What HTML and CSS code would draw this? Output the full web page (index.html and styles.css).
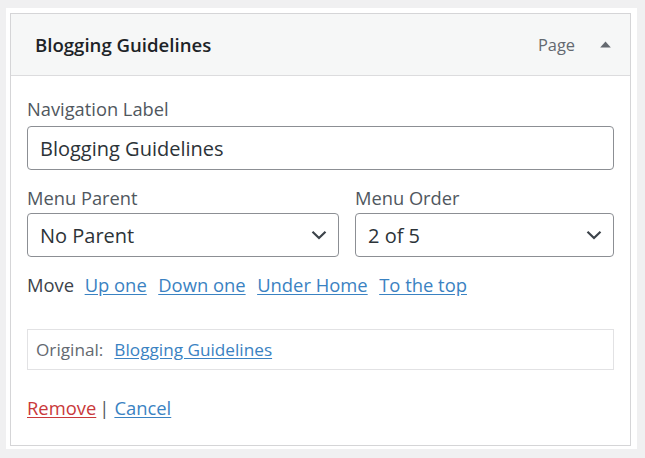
FILE: index.html
```html
<!DOCTYPE html>
<html lang="en">
<head>
<meta charset="utf-8">
<title>Menu item</title>
<link rel="stylesheet" href="styles.css">
</head>
<body>
<div class="frame">
  <div class="card">
    <div class="card-head">
      <span class="head-title">Blogging Guidelines</span>
      <span class="head-meta">
        <span class="head-type">Page</span>
        <svg class="head-toggle" width="11" height="7" viewBox="0 0 11 7"><path d="M5.5 0.5 L10.8 6.5 L0.2 6.5 Z" fill="#646970"/></svg>
      </span>
    </div>
    <div class="card-body">
      <label class="field-label">Navigation Label</label>
      <div class="text-input">Blogging Guidelines</div>

      <div class="select-row">
        <div class="select-col">
          <label class="field-label">Menu Parent</label>
          <div class="select-box">
            <span>No Parent</span>
            <svg class="chev" width="16" height="10" viewBox="0 0 16 10"><path d="M1.5 1.8 L8 8 L14.5 1.8" fill="none" stroke="#3c434a" stroke-width="2.2"/></svg>
          </div>
        </div>
        <div class="select-col">
          <label class="field-label">Menu Order</label>
          <div class="select-box">
            <span>2 of 5</span>
            <svg class="chev" width="16" height="10" viewBox="0 0 16 10"><path d="M1.5 1.8 L8 8 L14.5 1.8" fill="none" stroke="#3c434a" stroke-width="2.2"/></svg>
          </div>
        </div>
      </div>

      <div class="move-row">
        <span class="move-label">Move</span>
        <a class="link" href="#">Up one</a>
        <a class="link" href="#">Down one</a>
        <a class="link" href="#">Under Home</a>
        <a class="link" href="#">To the top</a>
      </div>

      <div class="original">
        <span class="orig-label">Original:</span>
        <a class="link" href="#">Blogging Guidelines</a>
      </div>

      <div class="actions">
        <a class="link danger" href="#">Remove</a><span class="sep">|</span><a class="link" href="#">Cancel</a>
      </div>
    </div>
  </div>
</div>
</body>
</html>
```

FILE: styles.css
```css
html, body {
  margin: 0;
  padding: 0;
}
body {
  background: #f0f0f1;
  font-family: "Open Sans", "Noto Sans", sans-serif;
  color: #2c3338;
  padding: 8px 8px 9px 6px;
  width: 645px;
  height: 458px;
  box-sizing: border-box;
}
.frame {
  background: #fff;
  padding: 5px 6px 3px 4px;
  height: 441px;
  box-sizing: border-box;
}
.card {
  border: 1px solid #d5d5d7;
  height: 433px;
  box-sizing: border-box;
  background: #fff;
}
.card-head {
  background: #f6f7f7;
  border-bottom: 1px solid #dcdcde;
  height: 62px;
  box-sizing: border-box;
  display: flex;
  align-items: center;
  justify-content: space-between;
  padding: 0 19px 0 24px;
}
.head-title {
  font-weight: 600;
  font-size: 18.6px;
  color: #1d2327;
}
.head-meta {
  display: flex;
  align-items: center;
  gap: 25px;
}
.head-type {
  font-size: 16.4px;
  color: #646970;
}
.head-toggle {
  display: block;
}
.card-body {
  padding: 0 16px;
}
.field-label {
  display: block;
  font-size: 18.3px;
  line-height: 22px;
  color: #50575e;
}
.card-body > .field-label {
  margin-top: 22px;
  margin-bottom: 6px;
}
.text-input,
.select-box {
  height: 44px;
  box-sizing: border-box;
  border: 1px solid #8c8f94;
  border-radius: 4px;
  display: flex;
  align-items: center;
  padding: 0 12px;
  font-size: 20px;
  color: #2c3338;
}
.select-box {
  justify-content: space-between;
  padding-right: 11px;
}
.chev {
  display: block;
}
.select-row {
  display: grid;
  grid-template-columns: 312px 1fr;
  gap: 16px;
  margin-top: 17px;
}
.select-col .field-label {
  margin-bottom: 4px;
}
.move-row {
  display: flex;
  align-items: baseline;
  gap: 11.5px;
  margin-top: 16px;
  font-size: 18.4px;
  line-height: 24px;
}
.move-label {
  color: #3c434a;
  margin-right: -1px;
}
.link {
  color: #3a82c2;
  text-decoration: underline;
  text-underline-offset: 2px;
}
.link.danger {
  color: #c9393a;
}
.original {
  margin-top: 32px;
  height: 41px;
  box-sizing: border-box;
  border: 1px solid #e2e2e4;
  display: flex;
  align-items: center;
  padding: 0 8px;
  gap: 11px;
  font-size: 17.2px;
}
.orig-label {
  color: #646970;
}
.actions {
  margin-top: 26px;
  font-size: 18.4px;
  line-height: 24px;
}
.sep {
  color: #50575e;
  margin: 0 5px 0 3px;
}
```
